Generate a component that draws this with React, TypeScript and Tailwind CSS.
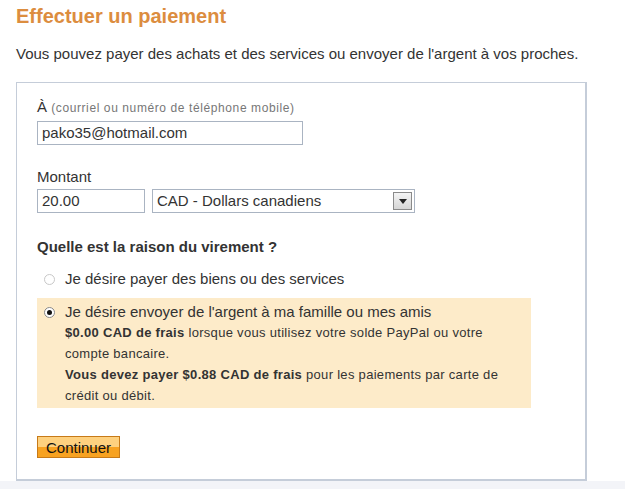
export default function App() {
  return (
    <div className="min-h-[489px] bg-white font-['Liberation_Sans',Arial,sans-serif] text-[#333]">
      <div className="px-4 pt-[3px]">
        <h1 className="text-[20px] font-bold text-[#dc8d3f] leading-[26px]">Effectuer un paiement</h1>
        <p className="mt-[16px] text-[15px] leading-[18px]">
          Vous pouvez payer des achats et des services ou envoyer de l'argent à vos proches.
        </p>
      </div>
      <div className="ml-4 mt-[19px] w-[571px] border border-[#c5cdd9] border-b-2 border-r-2 bg-white pl-5 pt-[15px] pb-[19px]">
        <div className="text-[15px] leading-[18px]">
          À <span className="text-[12px] tracking-[0.6px] text-[#777]">(courriel ou numéro de téléphone mobile)</span>
        </div>
        <div className="mt-[4px] flex h-[24px] w-[266px] items-center border border-[#aab4c2] px-[4px] text-[15px]">
          pako35@hotmail.com
        </div>
        <div className="mt-[23px] text-[15px] leading-[18px]">Montant</div>
        <div className="mt-[3px] flex gap-[7px]">
          <div className="flex h-[24px] w-[108px] items-center border border-[#aab4c2] px-[4px] text-[15px]">20.00</div>
          <div className="flex h-[24px] w-[263px] items-center justify-between border border-[#aab4c2] pl-[4px] pr-[2px] text-[15px]">
            <span>CAD - Dollars canadiens</span>
            <span className="flex h-[18px] w-[19px] items-center justify-center border border-[#8a8a8a] bg-gradient-to-b from-[#f4f4f4] to-[#d6d6d6]">
              <svg width="8" height="5" viewBox="0 0 8 5"><path d="M0 0h8L4 5z" fill="#222" /></svg>
            </span>
          </div>
        </div>
        <div className="mt-[25px] text-[15px] font-bold leading-[18px]">Quelle est la raison du virement ?</div>
        <label className="mt-[14px] flex items-center pl-[7px] text-[15px] leading-[18px]">
          <span className="mr-[10px] h-[11px] w-[11px] rounded-full border border-[#c8c8c8] bg-white" />
          Je désire payer des biens ou des services
        </label>
        <div className="mt-[10px] w-[494px] bg-[#fdebc9] pb-[2px] pl-[7px] pr-[16px] pt-[4px]">
          <div className="flex items-center text-[15px] leading-[20px]">
            <span className="mr-[10px] flex h-[11px] w-[11px] items-center justify-center rounded-full border border-[#888] bg-white">
              <span className="h-[5px] w-[5px] rounded-full bg-[#111]" />
            </span>
            Je désire envoyer de l'argent à ma famille ou mes amis
          </div>
          <div className="pl-[21px] text-[13px] tracking-[0.3px] leading-[21px]">
            <div>
              <b>$0.00 CAD de frais</b> lorsque vous utilisez votre solde PayPal ou votre compte bancaire.
            </div>
            <div>
              <b>Vous devez payer $0.88 CAD de frais</b> pour les paiements par carte de crédit ou débit.
            </div>
          </div>
        </div>
        <button className="mt-[28px] h-[22px] w-[83px] border border-[#c77a18] bg-gradient-to-b from-[#fed17f] from-50% to-[#f7a221] to-50% text-[15px] text-[#111]">
          Continuer
        </button>
      </div>
      <div className="h-[12px] bg-[#f3f4f8]" />
    </div>
  );
}
